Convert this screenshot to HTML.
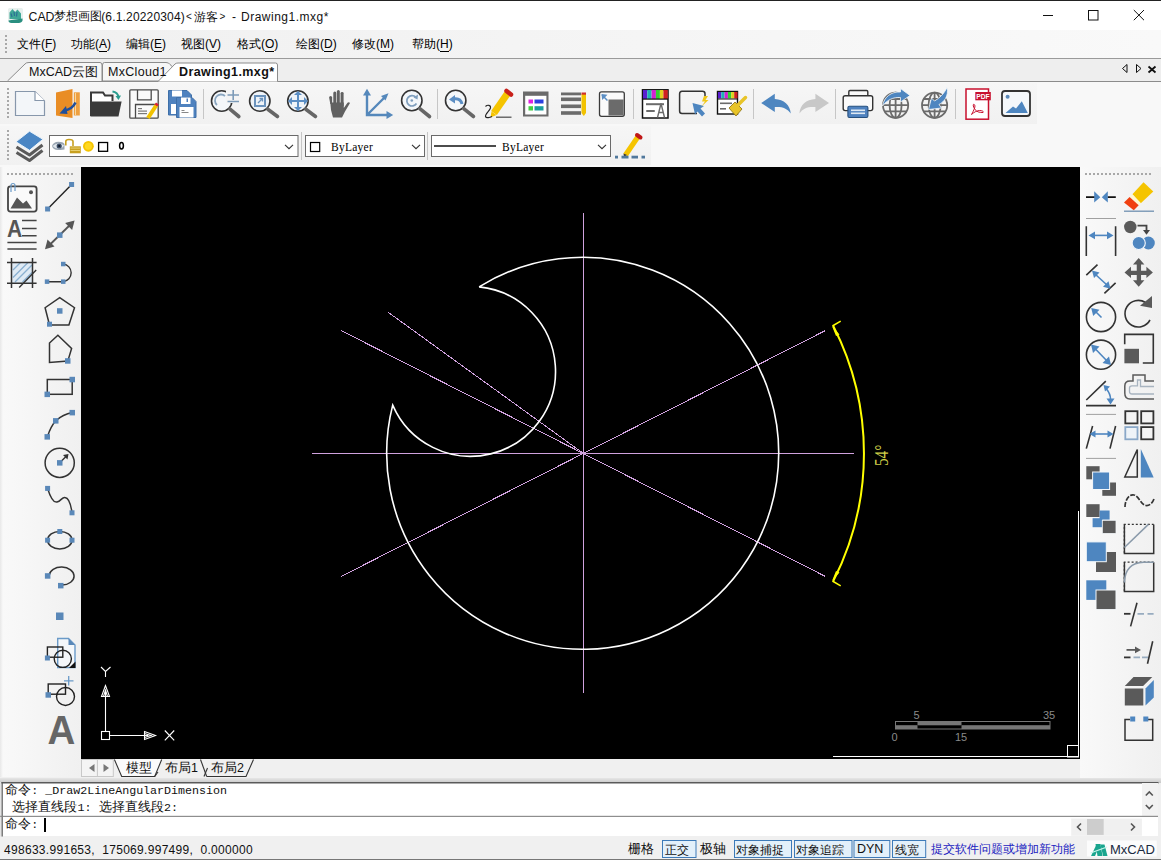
<!DOCTYPE html>
<html><head><meta charset="utf-8">
<style>
*{box-sizing:border-box;margin:0;padding:0}
html,body{width:1161px;height:860px;overflow:hidden;background:#f0f0f0;font-family:"Liberation Sans",sans-serif;color:#000;position:relative}
.a{position:absolute}
.t{position:absolute;white-space:nowrap;line-height:1}
.m{font-size:12px;top:38px}
.m u{text-decoration:none;border-bottom:1px solid #000}
.mono{font-family:"Liberation Mono",monospace}
#svg{position:absolute;left:0;top:0}
.cj{font-size:13px;letter-spacing:0.1px}
</style></head><body>
<!-- top border -->
<div class="a" style="left:0;top:0;width:1161px;height:1px;background:#222"></div>
<!-- title bar -->
<div class="a" style="left:0;top:1px;width:1161px;height:29px;background:#fff"></div>
<div class="t" style="left:28.5px;top:10.5px;font-size:12.3px;color:#111">CAD</div>
<div class="t" style="left:53.7px;top:10.5px;font-size:11.8px;color:#111">梦想画图</div>
<div class="t" style="left:101.2px;top:10.5px;font-size:12px;letter-spacing:0.17px;color:#111">(6.1.20220304)</div>
<div class="t" style="left:186px;top:11.5px;font-size:10px;color:#111">&lt;</div>
<div class="t" style="left:194px;top:10.5px;font-size:12px;color:#111">游客</div>
<div class="t" style="left:219.5px;top:11.5px;font-size:10px;color:#111">&gt;</div>
<div class="t" style="left:232px;top:10.5px;font-size:12px;color:#111">-</div>
<div class="t" style="left:241px;top:10.5px;font-size:12px;letter-spacing:0.5px;color:#111">Drawing1.mxg*</div>
<!-- menu bar -->
<div class="a" style="left:0;top:30px;width:1161px;height:28px;background:linear-gradient(90deg,#f0f0f0,#f9f9f9)"></div>
<div class="a" style="left:0;top:58px;width:1161px;height:1px;background:#9a9a9a"></div>
<div class="t m" style="left:17px">文件(<u>F</u>)</div>
<div class="t m" style="left:71px">功能(<u>A</u>)</div>
<div class="t m" style="left:126px">编辑(<u>E</u>)</div>
<div class="t m" style="left:181px">视图(<u>V</u>)</div>
<div class="t m" style="left:237px">格式(<u>O</u>)</div>
<div class="t m" style="left:296px">绘图(<u>D</u>)</div>
<div class="t m" style="left:352px">修改(<u>M</u>)</div>
<div class="t m" style="left:412px">帮助(<u>H</u>)</div>
<!-- tab bar -->
<div class="a" style="left:0;top:59px;width:1161px;height:22px;background:#eeeeee"></div>
<div class="a" style="left:0;top:81px;width:1161px;height:1px;background:#8c8c8c"></div>
<!-- toolbar1 -->
<div class="a" style="left:0;top:82px;width:1161px;height:85px;background:#f8f8f8"></div>
<div class="a" style="left:0;top:83px;width:1037px;height:41px;background:linear-gradient(#f6f6f6,#f1f1f1)"></div>
<!-- toolbar2 -->
<div class="a" style="left:0;top:126px;width:651px;height:39px;background:linear-gradient(#f6f6f6,#f1f1f1)"></div>
<!-- left toolbar -->
<div class="a" style="left:0;top:167px;width:81px;height:610px;background:linear-gradient(90deg,#e8e8e8 0,#f9f9f9 3px,#f0f0f0)"></div>
<!-- canvas -->
<div class="a" style="left:81px;top:167px;width:999px;height:592px;background:#000"></div>
<!-- right toolbar -->
<div class="a" style="left:1080px;top:167px;width:81px;height:611px;background:linear-gradient(90deg,#f9f9f9,#f0f0f0)"></div>
<!-- layout tabs -->
<div class="a" style="left:81px;top:759px;width:998px;height:19px;background:#f0f0f0"></div>
<!-- grey band -->
<div class="a" style="left:0;top:778px;width:1161px;height:5px;background:linear-gradient(#e6e6e6,#c8c8c8)"></div>
<div class="a" style="left:0;top:782px;width:1158px;height:1px;background:#777"></div>
<!-- command -->
<div class="a" style="left:0;top:783px;width:1158px;height:53px;background:#fff"></div>
<div class="a" style="left:1158px;top:783px;width:3px;height:53px;background:#f0f0f0"></div>
<div class="a" style="left:0;top:816px;width:1158px;height:1px;background:#a0a0a0"></div>
<div class="a" style="left:1072px;top:819px;width:69px;height:16px;background:#f0f0f0"></div>
<div class="a" style="left:1087px;top:819px;width:17px;height:16px;background:#cdcdcd"></div>
<div class="t mono" style="left:5px;top:784px;font-size:11.67px;color:#111;white-space:pre"><span class="cj">命令</span>: _Draw2LineAngularDimension</div>
<div class="t mono" style="left:5px;top:801px;font-size:11.67px;color:#111;white-space:pre"> <span class="cj">选择直线段</span>1: <span class="cj">选择直线段</span>2:</div>
<div class="t mono" style="left:5px;top:818px;font-size:11.67px;color:#111;white-space:pre"><span class="cj">命令</span>:</div>
<div class="a" style="left:44px;top:818px;width:2px;height:14px;background:#000"></div>
<!-- status -->
<div class="a" style="left:0;top:836px;width:1161px;height:24px;background:#f0f0f0"></div>
<div class="t" style="left:4px;top:844px;font-size:12px;letter-spacing:0.3px;color:#111;white-space:pre">498633.991653,  175069.997499,  0.000000</div>
<svg id="svg" width="1161" height="860" viewBox="0 0 1161 860">

<!-- DRAWING -->
<g fill="none" stroke="#d0a2de" stroke-width="1" shape-rendering="crispEdges">
<line x1="583.5" y1="213" x2="583.5" y2="693"/>
<line x1="312" y1="453.5" x2="854" y2="453.5"/>
<line x1="341" y1="330.5" x2="825.5" y2="576.5"/>
<line x1="341" y1="576.5" x2="825.5" y2="330.5"/>
<line x1="388.2" y1="312.3" x2="583.5" y2="453.5"/>
</g>
<path fill="none" stroke="#fff" stroke-width="1.6" d="M479.1 286.9 A196 196 0 1 1 392.7 405.1 A84.9 84.9 0 1 0 479.1 286.9"/>
<!-- dimension arc -->
<path d="M833.3 326A280.5 280.5 0 0 1 833.3 581" fill="none" stroke="#ffff00" stroke-width="2"/>
<path d="M832.4 326L840.7 321.1" stroke="#ffff00" stroke-width="1.5" fill="none"/>
<path d="M832.4 581L840.7 585.9" stroke="#ffff00" stroke-width="1.5" fill="none"/>
<path d="M832 326L839.5 334.5L836 336Z" fill="#ffff00"/>
<path d="M832 581L839.5 572.5L836 571Z" fill="#ffff00"/>
<text transform="translate(888,466) rotate(-90) scale(0.8,1)" font-family="Liberation Serif" font-size="19" fill="#cfcf48">54°</text>
<!-- UCS -->
<g fill="none" stroke="#fff" stroke-width="1.1">
<rect x="101.5" y="731.5" width="8" height="8"/>
<path d="M105.5 731.5V690M109.5 735.5H148"/>
<path d="M105.5 685.5L101.5 696.5H109.5Z"/>
<path d="M103.5 696.5L105.5 690L107.5 696.5"/>
<path d="M155.5 735.5L144.5 731.5V739.5Z"/>
<path d="M144.5 733.5L151 735.5L144.5 737.5"/>
<path d="M101 667L105.5 671.5L110.5 667M105.5 671.5V677"/>
<path d="M164.8 730.5L174.2 740.4M174.2 730.5L164.8 740.4"/>
</g>
<!-- scale bar -->
<g>
<rect x="895.5" y="721.5" width="154.5" height="7.5" fill="none" stroke="#777" stroke-width="1"/>
<rect x="895.5" y="725.2" width="22" height="3.8" fill="#777"/>
<rect x="917.5" y="721.5" width="44" height="3.8" fill="#777"/>
<rect x="961.5" y="725.2" width="88.5" height="3.8" fill="#777"/>
<g font-family="Liberation Sans" font-size="11" fill="#8a8a8a">
<text x="913.5" y="718.5">5</text><text x="1043" y="718.5">35</text><text x="891.5" y="740.5">0</text><text x="955" y="740.5">15</text>
</g>
</g>
<!-- viewport border lines -->
<path d="M833 756.5H1078.5V511" fill="none" stroke="#fff" stroke-width="1"/>
<rect x="1067.5" y="745.5" width="11" height="11.5" fill="none" stroke="#fff" stroke-width="1"/>

<!-- TOOLBAR1 -->
<g id="tb1">
<!-- grips -->
<g fill="#a8a8a8"><rect x="7" y="88" width="2" height="2"/><rect x="7" y="92" width="2" height="2"/><rect x="7" y="96" width="2" height="2"/><rect x="7" y="100" width="2" height="2"/><rect x="7" y="104" width="2" height="2"/><rect x="7" y="108" width="2" height="2"/><rect x="7" y="112" width="2" height="2"/><rect x="7" y="116" width="2" height="2"/></g>
<!-- 1 new -->
<path d="M15.5 91.5H35L44.5 101V115.5H15.5Z" fill="#f3f6f9" stroke="#8797ab" stroke-width="1.2"/>
<path d="M35 91.5V100.5H44.5" fill="#fff" stroke="#8797ab" stroke-width="1.2"/>
<!-- 2 orange open -->
<path d="M56 92.5L72.5 89V118L56 115.5Z" fill="#e98d25"/>
<rect x="73.8" y="92.3" width="6" height="23.2" fill="#eea040"/>
<rect x="75" y="93" width="1" height="22" fill="#f8d8a0"/>
<path d="M75.5 102.5C73 108 68 110 64 110.5" fill="none" stroke="#1f4f9c" stroke-width="2.6"/>
<path d="M59.5 113.5L66 106L67.5 114Z" fill="#1f4f9c"/>
<!-- 3 folder -->
<path d="M91 116V92.5H103L105 95.5H112.5V101" fill="#fff" stroke="#3a3a3a" stroke-width="2"/>
<path d="M90.5 101.5H121.6L118.5 116.6H90.5Z" fill="#3a3a3a"/>
<path d="M112.5 91.5C116 92 118 94 118.5 97" fill="none" stroke="#2a9d8f" stroke-width="2"/>
<path d="M115.5 96L121 95.5L118.5 100Z" fill="#2a9d8f"/>
<!-- 4 save -->
<rect x="129.8" y="89.8" width="28.4" height="28.4" rx="1" fill="#fafafa" stroke="#4a4a4a" stroke-width="1.3"/>
<path d="M137.5 90V99.8H151.2V90" fill="none" stroke="#4a4a4a" stroke-width="1.3"/>
<path d="M135.5 118V104.5H157.5" fill="none" stroke="#4a4a4a" stroke-width="1.3"/>
<g fill="#7a7a7a"><rect x="138" y="108" width="4" height="1.2"/><rect x="138" y="110.5" width="9" height="1.2"/><rect x="138" y="113" width="9" height="1.2"/></g>
<path d="M148 118L156.5 105" stroke="#f2c200" stroke-width="4"/>
<path d="M155.3 103.5L158 105.5" stroke="#d23" stroke-width="2.5"/>
<!-- 5 save as -->
<path d="M168.5 90.5H187L191.5 95V115H168.5Z" fill="#4f82bf" stroke="#3e6fa8" stroke-width="1"/>
<rect x="172" y="90.5" width="10" height="6" fill="#fff"/>
<rect x="171" y="104" width="6" height="10" fill="#fff"/>
<path d="M176.5 97.5H192L196 101.5V117.5H176.5Z" fill="#4f82bf" stroke="#3e6fa8" stroke-width="1"/>
<rect x="181" y="97.5" width="9.5" height="6.5" fill="#fff"/>
<rect x="186.5" y="98.5" width="1.5" height="3.5" fill="#4f82bf"/>
<rect x="179.5" y="107" width="14" height="10.5" fill="#fff"/>
<g fill="#888"><rect x="181.5" y="110" width="3" height="1"/><rect x="181.5" y="112" width="7" height="1"/></g>
<rect x="203" y="89" width="1" height="30" fill="#c6c6c6"/>
<!-- 6 zoom realtime -->
<circle cx="221.7" cy="101" r="10.2" fill="#f4f7fa" stroke="#333" stroke-width="1.6"/>
<path d="M230 109.2L238.8 116.5" stroke="#666" stroke-width="3.6" stroke-linecap="round"/>
<path d="M225 96A6 6 0 0 0 217 105" fill="none" stroke="#8aa6c0" stroke-width="1.8"/>
<rect x="226" y="90" width="14" height="13" fill="#f4f4f4"/>
<g stroke="#7d9bb8" stroke-width="1.6"><path d="M227.5 95H239M233.2 90V100M227.5 101.5H239"/></g>
<!-- 7 zoom window -->
<circle cx="259.8" cy="101" r="10.2" fill="#eef3f8" stroke="#333" stroke-width="1.6"/>
<path d="M267.8 109.2L277.5 116.5" stroke="#666" stroke-width="3.6" stroke-linecap="round"/>
<rect x="255" y="96" width="10" height="10" fill="none" stroke="#6b93bd" stroke-width="2"/>
<path d="M258 103L262.5 98.5M259.5 98.5H262.5V101.5" fill="none" stroke="#6b93bd" stroke-width="1.3"/>
<!-- 8 zoom pan -->
<circle cx="297.9" cy="101" r="10.2" fill="#eef3f8" stroke="#333" stroke-width="1.6"/>
<path d="M305.8 109.2L315.5 116.5" stroke="#666" stroke-width="3.6" stroke-linecap="round"/>
<g fill="#5b8ec4"><rect x="289" y="100" width="18" height="2"/><rect x="297" y="92" width="2" height="18"/>
<path d="M294 95L298 91L302 95ZM294 107L298 111L302 107ZM292 97L288 101L292 105ZM304 97L308 101L304 105Z"/></g>
<!-- 9 hand -->
<g fill="#616161">
<path d="M329.1 97.5Q329.1 95.9 330.6 95.9Q332.1 95.9 332.1 97.5V104H330.3Z"/>
<path d="M333.3 93Q333.3 91.5 334.8 91.5Q336.3 91.5 336.3 93V104H333.3Z"/>
<path d="M336.9 91.5Q336.9 90 338.4 90Q339.8 90 339.8 91.5V104H336.9Z"/>
<path d="M340.6 93.3Q340.6 91.9 342.1 91.9Q343.6 91.9 343.6 93.3V106H340.6Z"/>
<path d="M330.3 102.5H343.8V108L347.5 102.8Q349 101.8 350 103L345 111.5L342 117.6H333L331 110Z"/>
</g>
<!-- 10 axis -->
<g stroke="#5588bb" stroke-width="2.4" fill="none"><path d="M367 94V115H388M367 115L384.5 97.5"/></g>
<g fill="#5588bb"><path d="M363 95.5L367 88.8L371 95.5Z"/><path d="M386.5 111L393.2 115L386.5 119Z"/><path d="M381 96L388.5 93.2L385.5 100.5Z"/></g>
<!-- 11 zoom prev -->
<circle cx="411.8" cy="100.5" r="10.2" fill="#f4f7fa" stroke="#333" stroke-width="1.6"/>
<path d="M419.8 108.7L429.5 116.5" stroke="#666" stroke-width="3.6" stroke-linecap="round"/>
<path d="M415.8 97.2A5.2 5.2 0 1 0 416.5 103.5" fill="none" stroke="#7f9ebd" stroke-width="1.7"/>
<path d="M413.5 97.5L418 94.5L417.5 99.5Z" fill="#7f9ebd"/>
<circle cx="411.8" cy="100.5" r="1.3" fill="#7f9ebd"/>
<rect x="437" y="89" width="1" height="30" fill="#c6c6c6"/>
<!-- 12 zoom back -->
<circle cx="455.7" cy="100.5" r="10.2" fill="#f4f7fa" stroke="#333" stroke-width="1.6"/>
<path d="M463.7 108.7L473.5 116.5" stroke="#666" stroke-width="3.6" stroke-linecap="round"/>
<path d="M453 99C458 98 461 100 462 104" fill="none" stroke="#5b8ec4" stroke-width="3"/>
<path d="M449 99.5L455 95V103.5Z" fill="#5b8ec4"/>
<!-- 13 pencil -->
<path d="M494 113L507.5 93.5" stroke="#f5c400" stroke-width="7"/>
<path d="M506.5 91L511 94.5" stroke="#c8201a" stroke-width="4.5" stroke-linecap="round"/>
<path d="M490.5 117.5L491.5 111.5L496.5 115Z" fill="#f5c400"/>
<path d="M496 117.2H511.5" stroke="#555" stroke-width="1.3"/>
<path d="M485.5 106.5C487.5 104.5 491 105 490.5 108C489.5 111 485 114 485.5 116.5C486 118.5 490 117.5 492 116.5" fill="none" stroke="#222" stroke-width="1.1"/>
<!-- 14 layer props -->
<rect x="523" y="91.5" width="25.5" height="25" fill="#6b6b6b"/>
<rect x="525.2" y="95.8" width="21.2" height="18.7" fill="#fff"/>
<rect x="528.5" y="99.5" width="4.5" height="4" fill="#e020e0"/>
<rect x="534.5" y="99.5" width="9" height="4" fill="#2a3fe0"/>
<rect x="528.5" y="106.2" width="4.5" height="4.3" fill="#40d040"/>
<rect x="534.5" y="106.2" width="9" height="4.3" fill="#1a9e9e"/>
<!-- 15 lines -->
<g fill="#6b6b6b"><rect x="561" y="92.5" width="20" height="2.8"/><rect x="561" y="97.5" width="20" height="3.6"/><rect x="561" y="104.5" width="20" height="3.6"/><rect x="561" y="111.2" width="20" height="3.6"/></g>
<rect x="581.5" y="94" width="4.5" height="19" fill="#f2c200"/>
<rect x="581.5" y="92.5" width="4.5" height="2.2" fill="#d0302a"/>
<path d="M581.5 113L583.8 116L586 113Z" fill="#f2c200"/>
<!-- 16 box -->
<rect x="599.5" y="91.8" width="24.8" height="24.5" rx="2" fill="#fafafa" stroke="#3a3a3a" stroke-width="1.3"/>
<path d="M608.5 99.5H623.6V115.5H608.5Z" fill="#6b6b6b"/>
<path d="M602 95L607.5 100.5" stroke="#5b8ec4" stroke-width="1.5"/>
<path d="M601.5 94L607.5 94.8L602.2 100Z" fill="#5b8ec4"/>
<rect x="633" y="89" width="1" height="30" fill="#c6c6c6"/>
</g>
<g id="tb1b">
<!-- 17 text style -->
<rect x="642.5" y="89.8" width="25.5" height="28.2" fill="#fff" stroke="#111" stroke-width="1.5"/>
<g><rect x="643" y="90" width="4.3" height="9" fill="#5a1fd0"/><rect x="647.3" y="90" width="4.3" height="9" fill="#1fb3b3"/><rect x="651.6" y="90" width="4.3" height="9" fill="#d21fd2"/><rect x="655.9" y="90" width="4" height="9" fill="#30d030"/><rect x="659.9" y="90" width="3.5" height="9" fill="#e0d020"/><rect x="663.4" y="90" width="4.3" height="9" fill="#d02020"/></g>
<rect x="642.5" y="98.5" width="25.5" height="1.2" fill="#111"/>
<rect x="646" y="103.2" width="18" height="2" fill="#6b6b6b"/>
<rect x="646" y="110" width="9" height="2" fill="#6b6b6b" rx="1"/>
<path d="M657.5 117.5L661 103.5L664.5 117.5M659 112.5H663" fill="none" stroke="#6b6b6b" stroke-width="1.4"/>
<!-- 18 select -->
<path d="M697 113.5H682A2.5 2.5 0 0 1 679.6 111V93.8A2.5 2.5 0 0 1 682 91.3H702.5A2.5 2.5 0 0 1 705 93.8V97" fill="none" stroke="#333" stroke-width="1.5"/>
<path d="M692.5 103L704 106L700.5 108.5L705 113.5L702 116.5L697.5 111.5L695 114.5Z" fill="#4e86c0"/>
<path d="M704 96L702 101.5H705L701.5 106.5L708.5 100H705.5L708 96Z" fill="#f0c818"/>
<!-- 19 brush -->
<rect x="717.5" y="91.5" width="20" height="22.5" fill="#fff" stroke="#111" stroke-width="1.4"/>
<g><rect x="718" y="92" width="3.3" height="6.5" fill="#5a1fd0"/><rect x="721.3" y="92" width="3.3" height="6.5" fill="#1fb3b3"/><rect x="724.6" y="92" width="3.3" height="6.5" fill="#d21fd2"/><rect x="727.9" y="92" width="3.3" height="6.5" fill="#30d030"/><rect x="731.2" y="92" width="3" height="6.5" fill="#e0d020"/><rect x="734.2" y="92" width="3.3" height="6.5" fill="#d02020"/></g>
<rect x="717.5" y="98.5" width="20" height="1" fill="#111"/>
<rect x="720" y="102.5" width="12" height="1.6" fill="#6b6b6b"/>
<rect x="720" y="108" width="6" height="1.6" fill="#6b6b6b"/>
<path d="M729 108L735 102L742 109L736 116Z" fill="#e8c428" stroke="#8a7010" stroke-width="0.8"/>
<path d="M738 105L745.5 97.5" stroke="#e8c428" stroke-width="3.5" stroke-linecap="round"/>
<rect x="753" y="89" width="1" height="30" fill="#c6c6c6"/>
<!-- 20 undo -->
<path d="M761.2 103.1L774.8 93.8V99C784 99.5 790 105 790.8 113.5C787 108 782 106.5 774.8 107V111.9Z" fill="#4e86c0"/>
<!-- 21 redo -->
<path d="M829 103.1L815.4 93.8V99C806 99.5 800 105 799.4 113.5C803 108 808 106.5 815.4 107V111.9Z" fill="#c8c8c8"/>
<rect x="835" y="89" width="1" height="30" fill="#c6c6c6"/>
<!-- 22 print -->
<rect x="848.8" y="90.5" width="19" height="6" rx="1.2" fill="#fafafa" stroke="#333" stroke-width="1.4"/>
<rect x="843.2" y="95.8" width="29.5" height="14.8" rx="2" fill="#fafafa" stroke="#333" stroke-width="1.4"/>
<rect x="847.9" y="106.3" width="20" height="11.2" rx="1.5" fill="#4f82bf" stroke="#26507f" stroke-width="1.1"/>
<rect x="851" y="109.5" width="14" height="1.6" fill="#dfe9f3"/>
<rect x="851" y="112.5" width="14" height="1.6" fill="#dfe9f3"/>
<!-- 23 globe -->
<g fill="none" stroke="#6b6b6b" stroke-width="1.8">
<circle cx="895.6" cy="105.2" r="12.6"/><ellipse cx="895.6" cy="105.2" rx="6" ry="12.6"/><path d="M895.6 92.6V117.8M883 105.2H908.2M884.5 99H906.7M884.5 111.4H906.7"/>
<circle cx="934.6" cy="105.2" r="12.6"/><ellipse cx="934.6" cy="105.2" rx="6" ry="12.6"/><path d="M934.6 92.6V117.8M922 105.2H947.2M923.5 99H945.7M923.5 111.4H945.7"/>
</g>
<path d="M882.5 106C884 97 891 91.5 900.5 92V88.5L910 95.5L900.5 102V97.5C893 97 887 100 882.5 106Z" fill="#4e86c0" stroke="#f4f7fa" stroke-width="0.8"/>
<path d="M947 87.5C949 96 944 102 939 104.5L941.5 108L928.5 109.5L931.5 98L934.5 101C940 98 944.5 93 947 87.5Z" fill="#4e86c0" stroke="#f4f7fa" stroke-width="0.8"/>
<rect x="955" y="89" width="1" height="30" fill="#c6c6c6"/>
<!-- 25 pdf -->
<rect x="966" y="89" width="22.5" height="30.2" fill="#fff" stroke="#c8102e" stroke-width="1.5"/>
<rect x="975.3" y="92" width="15.5" height="8.3" fill="#c8102e"/>
<text x="983" y="99" font-family="Liberation Sans" font-weight="bold" font-size="7.4" fill="#fff" text-anchor="middle" textLength="13.5" lengthAdjust="spacingAndGlyphs">PDF</text>
<path d="M971.5 114.5C974 110 976 106 974.3 104.5C973 103.5 972.5 106 975 109.5C977 112 979 112.5 983 112.5C984 112 983 110.5 979.5 110.5C977 110.5 973.5 112.5 971.5 114.5Z" fill="none" stroke="#c8102e" stroke-width="1"/>
<!-- 26 image -->
<rect x="1002" y="91" width="28" height="25" rx="3" fill="#f4f7fa" stroke="#333" stroke-width="1.8"/>
<circle cx="1007.6" cy="96.8" r="2" fill="#5a88b8"/>
<path d="M1005.5 113L1013 106.5L1016 108.5L1021.8 101.3L1027.8 113Z" fill="#4e86c0"/>
</g>

<g id="title">
<!-- app icon -->
<path d="M8 9.5C8 8.5 9 8 10 8H21C22 8 23 8.5 23 9.5V20C23 22 21 23 18 23H11C9 23 8 22 8 20Z" fill="#e8f0ee"/>
<path d="M9.5 12.5L12.5 9L15 12L17.5 9.5L21 13.5V19H9.5Z" fill="#3fa796"/>
<path d="M8.5 20.5C12 19.5 18 19.5 22.5 18.5V20.5C22 22.5 20 23 17 23H11.5C9.5 23 8.5 22 8.5 20.5Z" fill="#2a8f80"/>
<path d="M11 13.5L12 17M14 11.5L14.5 16M17 12L16.5 16.5" stroke="#2d6f95" stroke-width="1.2"/>
<!-- window controls -->
<path d="M1043 15.5H1053" stroke="#111" stroke-width="1"/>
<rect x="1088.5" y="10.5" width="9.5" height="9.5" fill="none" stroke="#111" stroke-width="1"/>
<path d="M1133.8 10L1144 20.2M1144 10L1133.8 20.2" stroke="#111" stroke-width="1"/>
<!-- menu grip -->
<g fill="#a8a8a8"><rect x="5" y="35" width="2" height="2"/><rect x="5" y="39" width="2" height="2"/><rect x="5" y="43" width="2" height="2"/><rect x="5" y="47" width="2" height="2"/><rect x="5" y="51" width="2" height="2"/></g>
<!-- tabs -->
<path d="M7.5 81L25 64Q26 62.5 29 62.5H100Q102 62.5 102 65V81" fill="#f6f6f6" stroke="#8c8c8c" stroke-width="1"/>
<path d="M102.5 81V65Q102.5 62.5 104.5 62.5H166Q169 62.5 170 64.5L176 70V81Z" fill="#f6f6f6" stroke="#8c8c8c" stroke-width="1"/>
<path d="M158 81.5L175 64Q176 63 178 63H275.5Q277.5 63 277.5 65V81.5" fill="#fff" stroke="#8c8c8c" stroke-width="1"/>
<path d="M1127 64.5V72.5L1122.5 68.5Z" fill="none" stroke="#111" stroke-width="1"/>
<path d="M1136.5 64.5V72.5L1141 68.5Z" fill="none" stroke="#111" stroke-width="1"/>
<path d="M1148.5 66.5L1155.5 72.5M1155.5 66.5L1148.5 72.5" stroke="#111" stroke-width="1.8"/>
</g>
<g id="tb2">
<g fill="#a8a8a8"><rect x="7" y="130" width="2" height="2"/><rect x="7" y="134" width="2" height="2"/><rect x="7" y="138" width="2" height="2"/><rect x="7" y="142" width="2" height="2"/><rect x="7" y="146" width="2" height="2"/><rect x="7" y="150" width="2" height="2"/><rect x="7" y="154" width="2" height="2"/><rect x="7" y="158" width="2" height="2"/></g>
<!-- layer icon -->
<path d="M16.5 147L29.5 155L42.5 145" fill="none" stroke="#5a5a5a" stroke-width="3" stroke-linejoin="round"/>
<path d="M16.5 152.5L29.5 160.5L42.5 150.5" fill="none" stroke="#5a5a5a" stroke-width="3" stroke-linejoin="round"/>
<path d="M16 141.8L29.5 131.2L42.9 139.3L29.5 150.3Z" fill="#4a86c4" stroke="#eaf4fb" stroke-width="1" stroke-linejoin="round"/>
<!-- combo1 -->
<rect x="49.5" y="135.5" width="248.5" height="21" fill="#fff" stroke="#6a6a6a" stroke-width="1"/>
<path d="M52 146Q53 142 58.5 141.8Q63 141.8 64.5 144V149.5Q60 150 58 150Q53 150 52 146Z" fill="#9aa6b2"/>
<path d="M52.5 146Q55 143.5 58.5 143.5Q62 143.5 64 145.5Q62 148.8 58.5 148.8Q55 148.8 52.5 146Z" fill="#dfe6ec"/>
<circle cx="59.2" cy="146" r="2.6" fill="#3a4c66"/><circle cx="59.2" cy="146" r="1.1" fill="#0e1622"/>
<path d="M65.8 145.5V141.5Q65.8 139.5 69 139.5Q73 139.5 73 141.5V146" fill="none" stroke="#c8a020" stroke-width="1.6"/>
<rect x="69.8" y="146.3" width="11" height="7" fill="#c8a020"/>
<g fill="#e8d070"><rect x="70.5" y="147.6" width="9.5" height="1"/><rect x="70.5" y="150" width="9.5" height="1"/></g>
<circle cx="88.4" cy="146.3" r="5.4" fill="#f5c400"/>
<circle cx="88.4" cy="146.3" r="3.5" fill="#ffd820"/>
<rect x="98.6" y="142.5" width="9" height="8.8" fill="#fff" stroke="#000" stroke-width="1.3"/>
<ellipse cx="121.5" cy="145.8" rx="1.9" ry="3.2" fill="none" stroke="#000" stroke-width="1.5"/>
<path d="M285 144.8L289 148.7L293 144.8" fill="none" stroke="#333" stroke-width="1.1"/>
<rect x="301" y="132" width="1" height="28" fill="#c6c6c6"/>
<!-- combo2 -->
<rect x="305.5" y="135.5" width="119" height="21" fill="#fff" stroke="#6a6a6a" stroke-width="1"/>
<rect x="310.5" y="142.5" width="9.2" height="9" fill="#fff" stroke="#000" stroke-width="1.2"/>
<path d="M412 144.8L416 148.7L420 144.8" fill="none" stroke="#333" stroke-width="1.1"/>
<rect x="427" y="132" width="1" height="28" fill="#c6c6c6"/>
<!-- combo3 -->
<rect x="431.5" y="135.5" width="179" height="21" fill="#fff" stroke="#6a6a6a" stroke-width="1"/>
<rect x="434" y="145.3" width="62" height="1.4" fill="#000"/>
<path d="M598 144.8L602 148.7L606 144.8" fill="none" stroke="#333" stroke-width="1.1"/>
<!-- pencil -->
<path d="M625.5 155L638.5 136" stroke="#f5c400" stroke-width="5.2"/>
<path d="M624 157L623.5 153.5L627 155Z" fill="#333"/>
<path d="M637 135L640.5 137.5" stroke="#c01818" stroke-width="4" stroke-linecap="round"/>
<g fill="#50789c"><rect x="615" y="155.7" width="3" height="2.8"/><rect x="621.5" y="155.7" width="7" height="2.8"/><rect x="631.5" y="155.7" width="6.5" height="2.8"/><rect x="641.5" y="155.7" width="3.5" height="2.8"/></g>
</g>

<g id="left">
<g fill="#a8a8a8"><rect x="7" y="173" width="2" height="2"/><rect x="11" y="173" width="2" height="2"/><rect x="15" y="173" width="2" height="2"/><rect x="19" y="173" width="2" height="2"/><rect x="23" y="173" width="2" height="2"/><rect x="27" y="173" width="2" height="2"/><rect x="31" y="173" width="2" height="2"/><rect x="35" y="173" width="2" height="2"/><rect x="39" y="173" width="2" height="2"/><rect x="43" y="173" width="2" height="2"/><rect x="47" y="173" width="2" height="2"/><rect x="51" y="173" width="2" height="2"/><rect x="55" y="173" width="2" height="2"/><rect x="59" y="173" width="2" height="2"/><rect x="63" y="173" width="2" height="2"/><rect x="67" y="173" width="2" height="2"/><rect x="71" y="173" width="2" height="2"/></g>
<rect x="8" y="186.3" width="28.6" height="25.3" rx="2.5" fill="#fafafa" stroke="#444" stroke-width="1.8"/>
<path d="M10.5 208.5L17 197.5L23 203.5L26.5 200.5L32 208.5Z" fill="#555"/>
<circle cx="31" cy="192.3" r="2" fill="#555"/>
<path d="M11 192V185.5Q11 183.5 13 183.5Q15 183.5 15 185.5V191" fill="none" stroke="#6a9ac8" stroke-width="1.2"/>
<path d="M47.6 209L71.6 184.5" stroke="#222" stroke-width="1.4"/>
<rect x="45.1" y="206.5" width="5" height="5" fill="#5a88b8"/>
<rect x="69.1" y="182.0" width="5" height="5" fill="#5a88b8"/>
<text transform="translate(7,236.6) scale(0.92,1)" font-family="Liberation Sans" font-weight="bold" font-size="23" fill="#555">A</text>
<g stroke="#444" stroke-width="1.5"><path d="M22 220.5H36.6M22 228.5H36.6M22 235.8H36.6M7.4 242.5H36.6M7.4 249H36.6"/></g>
<path d="M49 245.5L71 224" stroke="#555" stroke-width="1.8"/>
<path d="M45 249.2L47.5 239.5L54.5 246.5Z" fill="#555"/><path d="M74.6 220.4L72.1 230.1L65.1 223.1Z" fill="#555"/>
<rect x="57.0" y="232.4" width="5.5" height="5.5" fill="#5a88b8"/>
<rect x="11.5" y="262.5" width="21" height="20.7" fill="#dfeaf4"/>
<g stroke="#8ab0d0" stroke-width="1.3"><path d="M13 270L20.5 262.5M13 277.5L28 262.5M15 282L32 265M22.5 282L32 272.5"/></g>
<g stroke="#333" stroke-width="1.5"><path d="M11.5 258V288M32.5 258V288M7 262.5H36.6M7 283.2H36.6"/></g>
<path d="M19.2 287.5L36.2 270" stroke="#333" stroke-width="1.4"/>
<path d="M47 281.7H63.2A8.9 8.9 0 0 0 63.2 264" fill="none" stroke="#333" stroke-width="1.4"/>
<rect x="44.8" y="279.4" width="4.5" height="4.5" fill="#5a88b8"/>
<rect x="61.0" y="279.4" width="4.5" height="4.5" fill="#5a88b8"/>
<rect x="61.0" y="261.8" width="4.5" height="4.5" fill="#5a88b8"/>
<path d="M59.7 297.7L74.5 307.7L68.9 324.9H49.5L45.1 307.7Z" fill="none" stroke="#333" stroke-width="1.5"/>
<rect x="57.0" y="308.2" width="5.5" height="5.5" fill="#5a88b8"/>
<rect x="47.0" y="321.7" width="5" height="5" fill="#5a88b8"/>
<path d="M57.9 335.3L71.6 348.5L67.8 361.1L49.5 362.5V343Z" fill="none" stroke="#333" stroke-width="1.5"/>
<rect x="65.0" y="358.2" width="5.5" height="5.5" fill="#5a88b8"/>
<rect x="47.3" y="379.5" width="24.9" height="14.8" fill="none" stroke="#333" stroke-width="1.5"/>
<rect x="44.5" y="391.6" width="5.5" height="5.5" fill="#5a88b8"/>
<rect x="69.5" y="376.8" width="5.5" height="5.5" fill="#5a88b8"/>
<path d="M47.3 436.9Q51 426 55.7 420.8Q63 414.5 72.2 412.6" fill="none" stroke="#333" stroke-width="1.5"/>
<rect x="44.5" y="434.1" width="5.5" height="5.5" fill="#5a88b8"/>
<rect x="53.0" y="418.1" width="5.5" height="5.5" fill="#5a88b8"/>
<rect x="69.5" y="409.9" width="5.5" height="5.5" fill="#5a88b8"/>
<circle cx="59.7" cy="462.8" r="14.6" fill="none" stroke="#333" stroke-width="1.5"/>
<path d="M60 462.5L66.5 456" stroke="#333" stroke-width="1.5"/><path d="M68.5 454L67.5 459.5L63 455Z" fill="#333"/>
<rect x="57.0" y="460.1" width="5.5" height="5.5" fill="#5a88b8"/>
<path d="M47.6 488.4C50 496 53 503 57 502C61 501 62 497 65 497.5C69 498 71 505 72 512.8" fill="none" stroke="#333" stroke-width="1.5"/>
<rect x="45.1" y="485.9" width="5" height="5" fill="#5a88b8"/>
<rect x="69.5" y="510.3" width="5" height="5" fill="#5a88b8"/>
<ellipse cx="59.8" cy="540.2" rx="12.2" ry="8.8" fill="none" stroke="#333" stroke-width="1.5"/>
<rect x="57.3" y="529.0" width="5" height="5" fill="#5a88b8"/>
<rect x="45.1" y="537.7" width="5" height="5" fill="#5a88b8"/>
<rect x="69.5" y="537.7" width="5" height="5" fill="#5a88b8"/>
<path d="M47.6 576A12.5 9 0 1 1 60.7 585.6" fill="none" stroke="#333" stroke-width="1.5" transform="translate(1.5,-0.5)"/>
<rect x="44.9" y="573.2" width="5.5" height="5.5" fill="#5a88b8"/>
<rect x="58.0" y="582.9" width="5.5" height="5.5" fill="#5a88b8"/>
<rect x="56.0" y="612.5" width="7.5" height="7.5" fill="#5a88b8"/>
<path d="M57.7 667.5V638.5H68.5L75 645V667.5Z" fill="#f4f7fa" stroke="#6a9ac8" stroke-width="1.4"/>
<path d="M68.5 638.5V645H75Z" fill="#5a88b8"/>
<rect x="47.4" y="647" width="15.4" height="10.2" fill="none" stroke="#222" stroke-width="1.4"/>
<circle cx="62.8" cy="658.8" r="8.6" fill="none" stroke="#222" stroke-width="1.4"/>
<path d="M75.5 661.5V668H69Z" fill="#111"/>
<rect x="44.9" y="655.5" width="5" height="5" fill="#5a88b8"/>
<path d="M68.7 676V685.5M64 680.8H73.5" stroke="#6a9ac8" stroke-width="1.3"/>
<rect x="48.2" y="684" width="17.3" height="10.2" fill="none" stroke="#222" stroke-width="1.4"/>
<circle cx="65.5" cy="696.5" r="9" fill="none" stroke="#222" stroke-width="1.4"/>
<rect x="45.5" y="692.2" width="5.5" height="5.5" fill="#5a88b8"/>
<text transform="translate(47.6,743.7) scale(0.95,1)" font-family="Liberation Sans" font-weight="bold" font-size="40.5" fill="#666">A</text>
</g>
<g id="right">
<g fill="#a8a8a8"><rect x="1085" y="173" width="2" height="2"/><rect x="1089" y="173" width="2" height="2"/><rect x="1093" y="173" width="2" height="2"/><rect x="1097" y="173" width="2" height="2"/><rect x="1101" y="173" width="2" height="2"/><rect x="1105" y="173" width="2" height="2"/><rect x="1109" y="173" width="2" height="2"/><rect x="1113" y="173" width="2" height="2"/><rect x="1117" y="173" width="2" height="2"/><rect x="1121" y="173" width="2" height="2"/><rect x="1125" y="173" width="2" height="2"/><rect x="1129" y="173" width="2" height="2"/><rect x="1133" y="173" width="2" height="2"/><rect x="1137" y="173" width="2" height="2"/><rect x="1141" y="173" width="2" height="2"/><rect x="1145" y="173" width="2" height="2"/><rect x="1149" y="173" width="2" height="2"/></g>
<path d="M1086 197.2H1095M1107.5 197.2H1115.8" stroke="#111" stroke-width="1.8"/>
<path d="M1094.2 191.3L1100.3 197.2L1094.2 202.6ZM1107.8 191.3L1101.8 197.2L1107.8 202.6Z" fill="#4e86c0"/>

<path d="M1132.4 194.2L1143.5 182.3L1153.3 191.4L1140.8 203.2Z" fill="#f5c400"/>
<path d="M1130 196.8L1132.4 194.2L1140.8 203.2L1138.5 205.5Z" fill="#fff8d0"/>
<path d="M1124 202.5L1129.6 197L1138.7 205.3L1133.8 210.2Z" fill="#f04010"/>
<path d="M1124 211.2H1154" stroke="#7090b0" stroke-width="1.3"/>
<path d="M1086 218.5H1116" stroke="#a0a0a0" stroke-width="1"/>
<path d="M1086.3 226.3V255.9M1115.6 226.3V255.9" stroke="#333" stroke-width="1.6"/>
<path d="M1093 235.4H1109" stroke="#4e86c0" stroke-width="1.6"/>
<path d="M1088.5 235.4L1095 231.5V239.3ZM1113.5 235.4L1107 231.5V239.3Z" fill="#4e86c0"/>
<circle cx="1130.3" cy="227" r="6.2" fill="#5a5a5a"/>
<path d="M1137.5 225.6H1146.5V231" fill="none" stroke="#444" stroke-width="1.8"/>
<path d="M1143 230H1150L1146.5 234.8Z" fill="#444"/>
<circle cx="1148.4" cy="243" r="6.4" fill="#4e86c0"/>
<circle cx="1138.7" cy="243" r="6.6" fill="#4e86c0" stroke="#eef4fa" stroke-width="1.2"/>
<path d="M1086.3 275.2L1097.5 264.7M1104.4 293.3L1115.6 282.8" stroke="#333" stroke-width="1.6"/>
<path d="M1095 274L1107.5 285.5" stroke="#4e86c0" stroke-width="1.6"/>
<path d="M1092 270.5L1099.5 272.5L1094 278ZM1110.5 288.8L1103 286.8L1108.5 281.3Z" fill="#4e86c0"/>
<path d="M1138.9 263V282M1129 272.8H1148.5" stroke="#5a5a5a" stroke-width="4.3"/>
<path d="M1133 264.5L1138.7 258L1144.4 264.5ZM1133 280.3L1138.7 286.8L1144.4 280.3ZM1131 266.7L1124.5 272.4L1131 278.1ZM1146.4 266.7L1152.9 272.4L1146.4 278.1Z" fill="#5a5a5a"/>
<circle cx="1101" cy="317" r="14.6" fill="none" stroke="#333" stroke-width="1.6"/>
<path d="M1101.5 317.5L1094.5 310.5" stroke="#4e86c0" stroke-width="1.6"/>
<path d="M1091.2 307.9L1099.5 309.8L1093.2 316Z" fill="#4e86c0"/>
<path d="M1145.5 302.5A13.3 13.3 0 1 0 1150 320" fill="none" stroke="#333" stroke-width="1.6"/>
<path d="M1140 305.8L1152 296V307.9Z" fill="#5a5a5a"/>
<circle cx="1101" cy="354.7" r="14.6" fill="none" stroke="#333" stroke-width="1.6"/>
<path d="M1094.5 348L1107.5 361.5" stroke="#4e86c0" stroke-width="1.6"/>
<path d="M1091 344.5L1099.5 346.5L1093 353ZM1111 365L1102.5 363L1109 356.5Z" fill="#4e86c0"/>
<path d="M1124.7 344.2V334.4H1153.3V363H1142.8" fill="none" stroke="#333" stroke-width="1.6"/>
<rect x="1124.4" y="348.8" width="14.6" height="14.5" fill="#5a5a5a"/>
<path d="M1086.3 400L1105.8 381.2M1086 405.6H1116" stroke="#333" stroke-width="1.6"/>
<path d="M1106.5 389Q1110.5 394 1110.5 399" fill="none" stroke="#4e86c0" stroke-width="1.6"/>
<path d="M1103.5 385L1110 386.5L1105 391.5ZM1110.5 404.5L1106.5 398.5H1114.5Z" fill="#4e86c0"/>
<path d="M1154 399H1130Q1124.8 399 1124.8 393V386Q1124.8 381 1130 381H1133V375H1145V381H1154" fill="none" stroke="#5a5a5a" stroke-width="1.5"/>
<path d="M1154 394H1132Q1129.5 394 1129.5 391.5V388Q1129.5 385.8 1132 385.8H1137.5V380H1140.5V386.5H1154" fill="none" stroke="#a8b4c0" stroke-width="1.3"/>
<path d="M1086 414.4H1116" stroke="#a0a0a0" stroke-width="1"/>
<g fill="#f4f4f4" stroke="#333" stroke-width="1.8"><rect x="1125.3" y="411.2" width="12.2" height="12.2"/><rect x="1141.2" y="411.2" width="12.2" height="12.2"/><rect x="1141.2" y="427.1" width="12.2" height="12.2"/></g>
<rect x="1125.3" y="427.1" width="12.2" height="12.2" fill="#eef3f8" stroke="#8aa8c8" stroke-width="1.8"/>
<path d="M1086.3 448.6L1092.6 426M1110 448.6L1115.6 426" stroke="#333" stroke-width="1.6"/>
<path d="M1094 434H1109" stroke="#4e86c0" stroke-width="1.6"/>
<path d="M1089.5 434L1095.5 430.5V437.5ZM1113.5 434L1107.5 430.5V437.5Z" fill="#4e86c0"/>
<path d="M1086 458.4H1116" stroke="#a0a0a0" stroke-width="1"/>
<path d="M1137.3 449.5V477H1124.8Z" fill="#f4f4f4" stroke="#333" stroke-width="1.5"/>
<path d="M1140.8 449L1153.7 477.6H1140.8Z" fill="#4e86c0"/>
<rect x="1086.3" y="466.2" width="13.3" height="13.1" fill="#5a5a5a"/>
<rect x="1102.3" y="482.5" width="13.7" height="13.3" fill="#5a5a5a"/>
<rect x="1092.6" y="472" width="17" height="17.5" fill="#4e86c0" stroke="#f4f8fb" stroke-width="1"/>
<path d="M1125 507C1125 500 1129 494 1134 495C1139 496 1141 505 1146 505.5C1150 506 1153 502 1154 499" fill="none" stroke="#333" stroke-width="1.7" stroke-dasharray="5 1.5"/>
<rect x="1086.3" y="504.2" width="13.3" height="12.8" fill="#5a5a5a"/>
<rect x="1099.6" y="510.5" width="10" height="9.1" fill="#4e86c0"/>
<rect x="1092.6" y="518.2" width="9.7" height="9" fill="#4e86c0"/>
<rect x="1102.3" y="520.3" width="13.7" height="13.2" fill="#5a5a5a" stroke="#f4f8fb" stroke-width="0.8"/>
<path d="M1124.4 524.4V553.5H1153.7V524.4" fill="none" stroke="#333" stroke-width="1.5"/>
<path d="M1124.4 553V524.4H1153.7" fill="none" stroke="#333" stroke-width="1.3" stroke-dasharray="2 2"/>
<path d="M1124.4 547.5L1148.4 524.4" stroke="#8a9aaa" stroke-width="1.5"/>
<rect x="1096" y="552" width="20" height="20" fill="#5a5a5a"/>
<rect x="1086.3" y="541.9" width="20" height="19.8" fill="#4e86c0" stroke="#f4f8fb" stroke-width="1"/>
<path d="M1124.4 562.2V591.5H1153.7V562.2" fill="none" stroke="#333" stroke-width="1.5"/>
<path d="M1124.4 591V562.2H1153.7" fill="none" stroke="#333" stroke-width="1.3" stroke-dasharray="2 2"/>
<path d="M1124.4 582.4Q1125 563 1143.5 562.2H1153.7" fill="none" stroke="#8a9aaa" stroke-width="1.5"/>
<rect x="1086.3" y="580.3" width="20" height="19.6" fill="#4e86c0"/>
<rect x="1096" y="590" width="20" height="19.6" fill="#5a5a5a" stroke="#f4f8fb" stroke-width="1"/>
<path d="M1124 613.8H1130.5" stroke="#333" stroke-width="1.8"/>
<path d="M1137 602.8L1130.6 626.4" stroke="#333" stroke-width="1.6"/>
<path d="M1137.5 613.8H1144M1147.5 613.8H1153.6" stroke="#98acc0" stroke-width="1.8"/>
<path d="M1126.5 649.9H1136.5" stroke="#5a5a5a" stroke-width="1.8"/><path d="M1135 646.5L1141 649.9L1135 653.3Z" fill="#5a5a5a"/>
<path d="M1124 657.4H1130.5" stroke="#333" stroke-width="1.8"/>
<path d="M1133.5 657.4H1140M1142 657.4H1148" stroke="#98acc0" stroke-width="1.8"/>
<path d="M1152.7 641.2L1147.5 663.8" stroke="#333" stroke-width="1.6"/>
<path d="M1124.8 686L1133.5 676.9H1152.3L1143.1 686Z" fill="#5a5a5a"/>
<rect x="1124.8" y="688.5" width="18.5" height="17" fill="#5a5a5a"/>
<path d="M1145.5 688.5L1153.8 680V697.5L1145.5 705.5Z" fill="#4e86c0"/>
<path d="M1130 719.5H1125V740.3H1152.7V719.5H1148" fill="none" stroke="#333" stroke-width="1.5"/>
<rect x="1130.2" y="716.5" width="5" height="5" fill="#4e86c0"/><rect x="1143.3" y="716.5" width="5" height="5" fill="#4e86c0"/>
</g>
<g id="bottom">
<!-- layout tabs -->
<rect x="81.5" y="759.5" width="31.8" height="17" fill="#f4f4f4" stroke="#c8c8c8" stroke-width="1"/>
<path d="M97.4 760V776" stroke="#c8c8c8" stroke-width="1"/>
<path d="M94.5 764L89 768L94.5 772Z" fill="#777"/>
<path d="M103.5 764L109 768L103.5 772Z" fill="#777"/>
<path d="M114.4 759.5L121.7 776.5H154.7L161.7 759.5" fill="#fbfbfb" stroke="#333" stroke-width="1.1"/>
<path d="M154.7 776.5L158 772" stroke="#333" stroke-width="1.1"/>
<path d="M200.5 759.5L206.7 776.5" stroke="#333" stroke-width="1.1"/>
<path d="M204 776.5L207.5 768" stroke="#333" stroke-width="1.1"/>
<path d="M206.7 776.5H246L253.5 759.5" fill="none" stroke="#333" stroke-width="1.1"/>
<!-- command window borders -->
<rect x="0" y="782" width="1.5" height="54.5" fill="#e4e4e4"/><path d="M2.2 782.5V836.5" stroke="#666" stroke-width="1.3"/>
<path d="M1.5 782.7H1158.5" stroke="#5a5a5a" stroke-width="1.5"/>
<rect x="1142" y="783" width="16" height="33" fill="#f2f2f2"/>
<path d="M1145.8 795.5L1149.3 792L1152.8 795.5" fill="none" stroke="#555" stroke-width="1.6"/>
<path d="M1145.8 805L1149.3 808.5L1152.8 805" fill="none" stroke="#555" stroke-width="1.6"/>
<path d="M0 816.3H1158" stroke="#8a8a8a" stroke-width="1"/>
<rect x="1071.2" y="818.6" width="70.7" height="17.2" fill="#f0f0f0"/>
<rect x="1087" y="819" width="16.7" height="15.9" fill="#cdcdcd"/>
<path d="M1081 823.5L1077.5 827L1081 830.5" fill="none" stroke="#555" stroke-width="1.6"/>
<path d="M1131 823.5L1134.5 827L1131 830.5" fill="none" stroke="#555" stroke-width="1.6"/>
<!-- status boxes -->
<g fill="#e3f0fa" stroke="#3d7ab8" stroke-width="1">
<rect x="662.5" y="840.5" width="33.5" height="17"/>
<rect x="734.5" y="840.5" width="57" height="17"/>
<rect x="794.5" y="840.5" width="57.5" height="17"/>
<rect x="854" y="840.5" width="35.8" height="17"/>
<rect x="892.5" y="840.5" width="33.2" height="17"/>
</g>
<rect x="1087" y="840.5" width="69.7" height="16" fill="#fcfcfc"/>
<path d="M1091 856L1096 845.5H1099.5L1095 856Z" fill="#1aa58e"/>
<path d="M1095.5 844H1100.5L1102.5 856H1097.5Z" fill="#1aa58e"/>
<path d="M1100.5 844.5H1104.5L1107.5 856H1103Z" fill="#1aa58e"/>
<path d="M1090.5 853L1107 847" stroke="#c8f4ec" stroke-width="1.3"/>
<path d="M0 859.5H1161" stroke="#777" stroke-width="1"/>
</g>

</svg>
<div class="t" style="left:29px;top:66px;font-size:12.5px;color:#111">MxCAD云图</div>
<div class="t" style="left:108px;top:66px;font-size:12.5px;letter-spacing:0.3px;color:#111">MxCloud1</div>
<div class="t" style="left:179px;top:66px;font-size:12.5px;font-weight:bold;letter-spacing:0.4px;color:#111">Drawing1.mxg*</div>

<div class="t" style="left:331px;top:142px;font-size:11.5px;font-family:'Liberation Serif',serif;letter-spacing:0.25px;color:#000">ByLayer</div>
<div class="t" style="left:502px;top:142px;font-size:11.5px;font-family:'Liberation Serif',serif;letter-spacing:0.25px;color:#000">ByLayer</div>
<div class="t" style="left:126px;top:762px;font-size:12.5px;color:#111">模型</div>
<div class="t" style="left:165px;top:762px;font-size:12.5px;color:#111">布局1</div>
<div class="t" style="left:211px;top:762px;font-size:12.5px;color:#111">布局2</div>
<div class="t" style="left:628px;top:843px;font-size:12.5px;color:#111">栅格</div>
<div class="t" style="left:664.5px;top:843.5px;font-size:12px;color:#111">正交</div>
<div class="t" style="left:700px;top:843px;font-size:12.5px;color:#111">极轴</div>
<div class="t" style="left:736px;top:843.5px;font-size:12.3px;color:#111">对象捕捉</div>
<div class="t" style="left:796px;top:843.5px;font-size:12.3px;color:#111">对象追踪</div>
<div class="t" style="left:857px;top:843px;font-size:12.5px;color:#111">DYN</div>
<div class="t" style="left:894.5px;top:843.5px;font-size:12px;color:#111">线宽</div>
<div class="t" style="left:931px;top:843px;font-size:12px;color:#2222c0">提交软件问题或增加新功能</div>
<div class="t" style="left:1110px;top:843px;font-size:13px;color:#1a2a40">MxCAD</div>
</body></html>
